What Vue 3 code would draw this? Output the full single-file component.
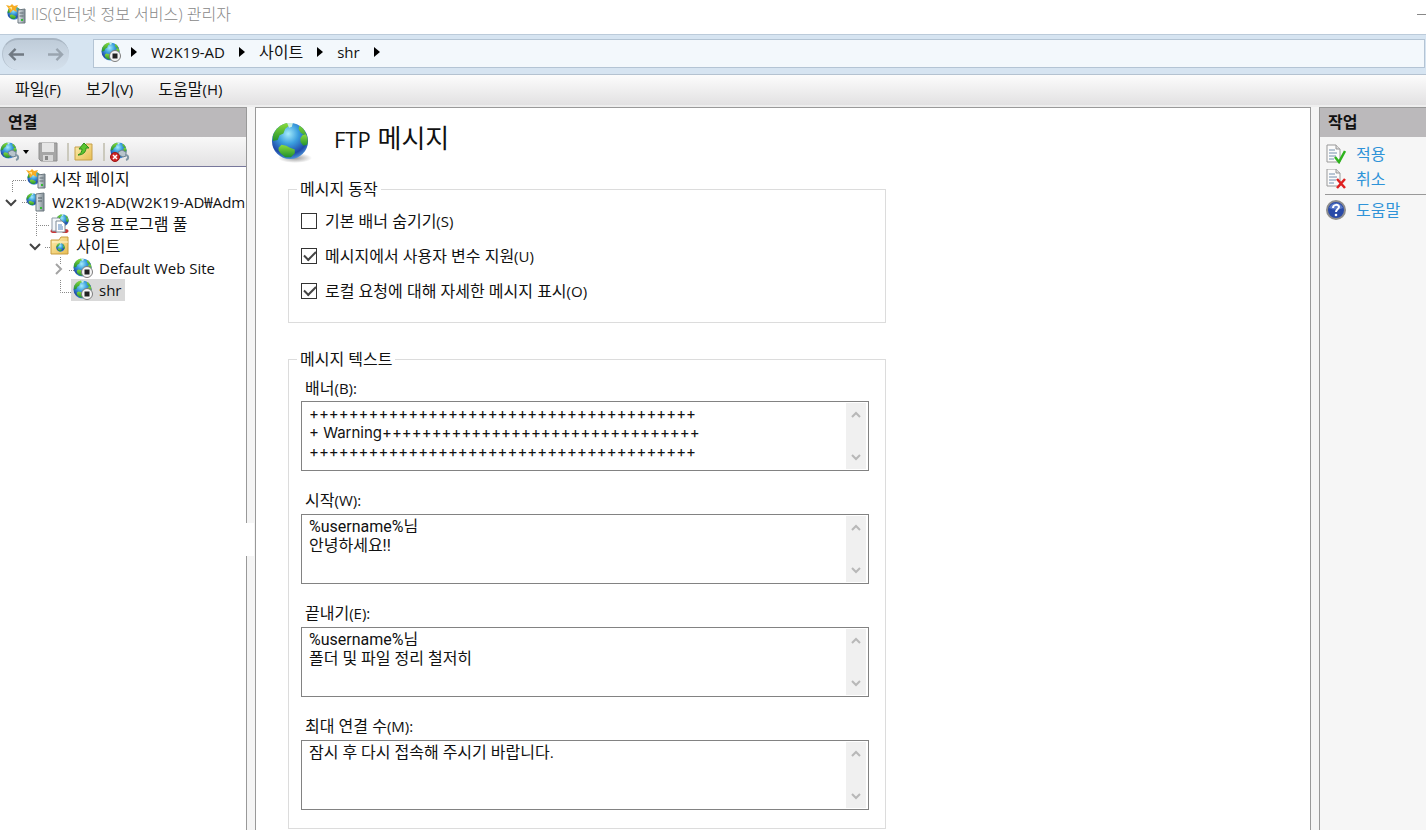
<script setup>
import { ref } from 'vue'

const crumbs = ref([
  { text: 'W2K19-AD', latin: true },
  { text: '사이트', latin: false },
  { text: 'shr', latin: true }
])

const menus = [
  { text: '파일', key: '(F)' },
  { text: '보기', key: '(V)' },
  { text: '도움말', key: '(H)' }
]

const tree = [
  { text: '시작 페이지', icon: 'server', level: 0 },
  { text: 'W2K19-AD(W2K19-AD₩Administrator)', icon: 'server-plain', level: 0, chevron: 'down', latin: true },
  { text: '응용 프로그램 풀', icon: 'pool', level: 1 },
  { text: '사이트', icon: 'folder', level: 1, chevron: 'down' },
  { text: 'Default Web Site', icon: 'site', level: 2, chevron: 'right', latin: true },
  { text: 'shr', icon: 'site', level: 2, latin: true, selected: true }
]

const options = ref([
  { id: 'hide', text: '기본 배너 숨기기', key: '(S)', on: false },
  { id: 'vars', text: '메시지에서 사용자 변수 지원', key: '(U)', on: true },
  { id: 'detail', text: '로컬 요청에 대해 자세한 메시지 표시', key: '(O)', on: true }
])

const messages = ref([
  {
    id: 'banner',
    text: '배너',
    key: '(B):',
    wide: true,
    value: '+'.repeat(39) + '\n+ Warning' + '+'.repeat(32) + '\n' + '+'.repeat(39)
  },
  { id: 'welcome', text: '시작', key: '(W):', value: '%username%님\n안녕하세요!!' },
  { id: 'exit', text: '끝내기', key: '(E):', value: '%username%님\n폴더 및 파일 정리 철저히' },
  { id: 'max', text: '최대 연결 수', key: '(M):', value: '잠시 후 다시 접속해 주시기 바랍니다.' }
])
</script>

<template>
  <div class="window">
    <svg class="defs" width="0" height="0" aria-hidden="true">
      <defs>
        <radialGradient id="sea" cx="45%" cy="30%" r="70%">
          <stop offset="0" stop-color="#a5ecfb" />
          <stop offset=".4" stop-color="#3c9fdf" />
          <stop offset=".8" stop-color="#2049a8" />
          <stop offset="1" stop-color="#4a92d8" />
        </radialGradient>
        <linearGradient id="land" x1="0" y1="0" x2="0" y2="1">
          <stop offset="0" stop-color="#8bdc3c" />
          <stop offset="1" stop-color="#21912f" />
        </linearGradient>
        <linearGradient id="gold" x1="0" y1="0" x2="1" y2="1">
          <stop offset="0" stop-color="#fdeeb1" />
          <stop offset="1" stop-color="#e8bd52" />
        </linearGradient>
        <linearGradient id="steel" x1="0" y1="0" x2="1" y2="0">
          <stop offset="0" stop-color="#e3e9ec" />
          <stop offset="1" stop-color="#7f8b93" />
        </linearGradient>
        <radialGradient id="shade">
          <stop offset="0" stop-color="#555" stop-opacity=".6" />
          <stop offset="1" stop-color="#555" stop-opacity="0" />
        </radialGradient>
      </defs>
      <symbol id="globe" viewBox="0 0 40 40">
        <circle cx="20" cy="20" r="19" fill="url(#sea)" />
        <path d="M2 15C4 7 11 2 17 1l2 3-4 3-2 5-4 2-2 5-5 1zM30 4c4 2 6 6 7 9l-2 1-4-3-2-4z" fill="url(#land)" />
        <path d="M8 27l3-3 5 1 4 2 5 2 0 4-4 4-6 0-5-4-2-3z" fill="url(#land)" />
        <path d="M33 14l4-1c2 4 2 7 1 11l-4 1-3-4 0-4z" fill="url(#land)" />
        <path d="M17 1h6l-1 4-3 1z" fill="#e8ffe4" opacity=".8" />
      </symbol>
      <symbol id="i-server" viewBox="0 0 20 20">
        <use href="#globe" x="1" y="2" width="14" height="14" />
        <path d="M0 1l4 1 2-2 2 2 4-1-2 4 1 3-4-2-3 3-1-4z" fill="#f7ad24" />
        <path d="M3 3l3 0 0 3z" fill="#ffe58b" />
        <path d="M12 6l7-1v14h-7z" fill="url(#steel)" stroke="#6b777e" />
        <path d="M13.500 9h4M13.500 12h4" stroke="#5e6b72" />
        <path d="M15 16h2" stroke="#3b3" stroke-width="2" />
      </symbol>
      <symbol id="i-server-plain" viewBox="0 0 20 20">
        <use href="#globe" x="0" y="1" width="13" height="13" />
        <path d="M10 2l8-1v18h-8z" fill="url(#steel)" stroke="#6b777e" />
        <path d="M12 6h4M12 9h4" stroke="#4f5c63" />
        <path d="M14 16h2" stroke="#3b3" stroke-width="2" />
      </symbol>
      <symbol id="i-pool" viewBox="0 0 20 20">
        <use href="#globe" x="6" y="0" width="13" height="13" />
        <ellipse cx="4" cy="17" rx="3.500" ry="2" fill="#c93636" />
        <ellipse cx="15" cy="17" rx="3.500" ry="2" fill="#c93636" />
        <path d="M2 4h7l2 2v11H2z" fill="#f4f7fa" stroke="#8d99a5" />
        <path d="M6 7h6l3 3v8H6z" fill="#fff" stroke="#7f8b98" />
        <path d="M8 11h4M8 13h5M8 15h5" stroke="#5182bd" />
      </symbol>
      <symbol id="i-folder" viewBox="0 0 20 20">
        <path d="M1 4h8l2-3h7v17H1z" fill="url(#gold)" stroke="#c99c3f" />
        <path d="M2 6h16" stroke="#fff5ce" />
        <use href="#globe" x="6" y="7" width="9" height="9" />
      </symbol>
      <symbol id="i-site" viewBox="0 0 20 20">
        <use href="#globe" x="0" y="0" width="19" height="19" />
        <circle cx="14" cy="14" r="5.500" fill="#f5f5f5" stroke="#7c7c7c" />
        <path d="M11.500 11.500h5v5h-5z" fill="#222" />
      </symbol>
      <symbol id="i-connect" viewBox="0 0 20 20">
        <use href="#globe" x="0" y="0" width="17" height="17" />
        <path d="M8 10l4-2 4 2v4l-3 1-4-2z" fill="#b8c4cc" stroke="#6f8390" />
        <path d="M15 13c4 0 4 4 1 5" fill="none" stroke="#8096a5" stroke-width="2" />
      </symbol>
    </svg>

    <header class="titlebar">
      <svg class="ico" viewBox="0 0 20 20" aria-hidden="true"><use href="#i-server" /></svg>
      <h1>IIS(인터넷 정보 서비스) 관리자</h1>
      <button class="minimize" type="button" aria-label="최소화"></button>
    </header>

    <nav class="navbar">
      <div class="travel">
        <button type="button" aria-label="뒤로">
          <svg viewBox="0 0 18 16"><path d="M8 2L2 8l6 6M2 8h15" fill="none" stroke="#717a83" stroke-width="2.500" /></svg>
        </button>
        <button type="button" aria-label="앞으로">
          <svg viewBox="0 0 18 16"><path d="M10 2l6 6-6 6M16 8H1" fill="none" stroke="#9aa5b0" stroke-width="2.500" /></svg>
        </button>
      </div>
      <div class="address">
        <svg class="ico" viewBox="0 0 20 20" aria-hidden="true"><use href="#i-site" /></svg>
        <svg class="tri" viewBox="0 0 6 10" aria-hidden="true"><path d="M0 0l6 5-6 5z" /></svg>
        <template v-for="c in crumbs" :key="c.text">
          <a href="#" :class="{ latin: c.latin }">{{ c.text }}</a>
          <svg class="tri" viewBox="0 0 6 10" aria-hidden="true"><path d="M0 0l6 5-6 5z" /></svg>
        </template>
      </div>
    </nav>

    <div class="menubar">
      <button v-for="m in menus" :key="m.key" type="button">{{ m.text }}<span class="key">{{ m.key }}</span></button>
    </div>

    <div class="body">
      <aside class="connections">
        <h2>연결</h2>
        <div class="tools">
          <button class="split" type="button" aria-label="연결 만들기">
            <svg class="ico" viewBox="0 0 20 20"><use href="#i-connect" /></svg>
            <svg class="drop" viewBox="0 0 6 4"><path d="M0 0h6L3 4z" /></svg>
          </button>
          <button type="button" aria-label="저장">
            <svg class="ico" viewBox="0 0 20 20">
              <path d="M1 1h18v18H3l-2-2z" fill="#a6a6a6" stroke="#8e8e8e" />
              <path d="M4 1h12v9H4z" fill="#e6e6e6" />
              <path d="M5 13h10v6H5z" fill="#d8d8d8" />
              <path d="M7 14h3v4H7z" fill="#888" />
            </svg>
          </button>
          <i class="sep"></i>
          <button type="button" aria-label="위로">
            <svg class="ico" viewBox="0 0 20 20">
              <path d="M1 5h9l2-3h6v16H1z" fill="url(#gold)" stroke="#c6a04b" />
              <path d="M4 13c3-1 4-4 4-6H5l5-6 5 5h-3c0 4-3 7-8 7z" fill="#5cc52f" stroke="#2d8d1c" />
            </svg>
          </button>
          <i class="sep"></i>
          <button type="button" aria-label="연결 제거">
            <svg class="ico" viewBox="0 0 20 20">
              <use href="#i-connect" />
              <circle cx="5" cy="15" r="4.500" fill="#cf2727" stroke="#9c1515" />
              <path d="M3 13l4 4M7 13l-4 4" stroke="#fff" stroke-width="1.500" />
            </svg>
          </button>
        </div>
        <div class="tree-box">
          <svg class="lines" width="100" height="140" aria-hidden="true">
            <path
              d="M12.500 25V13.500H27M22 35.500h5M36.500 46v24M38 58.500h12M45 80.500h6M60.500 90v8M69 103.500h5M60.500 113v12.500H72"
              fill="none" stroke="#888" stroke-dasharray="1 1"
            />
          </svg>
          <ul>
            <li v-for="n in tree" :key="n.text + n.icon" :class="'lv' + n.level">
              <button v-if="n.chevron" class="chev" type="button" :aria-label="n.text">
                <svg viewBox="0 0 16 16">
                  <path v-if="n.chevron === 'down'" d="M3 6l5 5 5-5" stroke="#444" />
                  <path v-else d="M6 4l5 5-5 5" stroke="#a3a3a3" />
                </svg>
              </button>
              <span v-else class="chev"></span>
              <a href="#" :class="{ selected: n.selected, latin: n.latin }">
                <svg class="ico" viewBox="0 0 20 20" aria-hidden="true"><use :href="'#i-' + n.icon" /></svg>
                <span>{{ n.text }}</span>
              </a>
            </li>
          </ul>
        </div>
        <i class="notch"></i>
      </aside>

      <main class="content">
        <div class="heading">
          <svg viewBox="0 0 44 44" aria-hidden="true">
            <ellipse cx="25" cy="38" rx="17" ry="5" fill="url(#shade)" />
            <use href="#globe" x="1" y="2" width="38" height="38" />
          </svg>
          <h2><span>FTP</span> 메시지</h2>
        </div>

        <fieldset class="behavior">
          <legend>메시지 동작</legend>
          <label v-for="o in options" :key="o.id" :for="o.id">
            <input :id="o.id" v-model="o.on" type="checkbox" />
            <span>{{ o.text }}<span class="key">{{ o.key }}</span></span>
          </label>
        </fieldset>

        <fieldset class="texts">
          <legend>메시지 텍스트</legend>
          <div v-for="m in messages" :key="m.id" class="field">
            <label :for="m.id">{{ m.text }}<span class="key">{{ m.key }}</span></label>
            <div class="box">
              <textarea :id="m.id" v-model="m.value" :class="{ wide: m.wide }" rows="3" spellcheck="false"></textarea>
              <div class="scroll" aria-hidden="true">
                <svg viewBox="0 0 12 10"><path d="M2 8l4-4 4 4" /></svg>
                <svg viewBox="0 0 12 10"><path d="M2 2l4 4 4-4" /></svg>
              </div>
            </div>
          </div>
        </fieldset>
      </main>

      <aside class="actions">
        <h2>작업</h2>
        <a href="#">
          <svg class="ico" viewBox="0 0 20 20" aria-hidden="true">
            <path d="M1 1h9l4 4v13H1z" fill="#fbfbfb" stroke="#999" />
            <path d="M10 1v4h4" fill="#ddd" stroke="#999" />
            <path d="M3 6h6M3 9h8M3 12h7M3 15h5" stroke="#7590ad" />
            <path d="M9 13l4 5 6-11" fill="none" stroke="#2eb31d" stroke-width="2.500" />
          </svg>
          적용
        </a>
        <a href="#">
          <svg class="ico" viewBox="0 0 20 20" aria-hidden="true">
            <path d="M1 0h9l4 4v13H1z" fill="#fbfbfb" stroke="#999" />
            <path d="M10 0v4h4" fill="#ddd" stroke="#999" />
            <path d="M3 5h6M3 8h8M3 11h7M3 14h5" stroke="#7590ad" />
            <path d="M11 10l8 9M19 10l-8 9" stroke="#df2020" stroke-width="2.500" />
          </svg>
          취소
        </a>
        <hr />
        <a href="#">
          <svg class="ico" viewBox="0 0 20 20" aria-hidden="true">
            <circle cx="10" cy="10" r="9" fill="#294aa8" stroke="#8d8d8d" stroke-width="2" />
            <path d="M3 8a7.500 7.500 0 0 1 14 0q-7 3-14 0z" fill="#7d9be0" opacity=".6" />
            <path d="M7 8c0-4 6-4 6-1 0 2-3 2-3 5" fill="none" stroke="#fff" stroke-width="2" />
            <circle cx="10" cy="15" r="1.300" fill="#fff" />
          </svg>
          도움말
        </a>
      </aside>
    </div>
  </div>
</template>

<style>
body {
  margin: 0;
  overflow: hidden;
}
</style>

<style scoped>
* {
  box-sizing: border-box;
}
.window {
  display: flex;
  flex-direction: column;
  height: 100vh;
  overflow: hidden;
  background: #fff;
  color: #111;
  font-family: "Open Sans", "Noto Sans CJK KR", sans-serif;
  font-size: 16px;
  line-height: 20px;
}
.defs {
  position: absolute;
}
h1,
h2 {
  margin: 0;
  font-weight: 400;
}
button {
  padding: 0;
  border: 0;
  background: none;
  color: inherit;
  font: inherit;
}
a {
  color: inherit;
  text-decoration: none;
}
.ico {
  flex: none;
  display: block;
  width: 20px;
  height: 20px;
}
.latin,
.key {
  font-size: 15px;
}
.titlebar {
  display: flex;
  flex: none;
  align-items: center;
  gap: 5px;
  height: 34px;
  padding: 0 0 6px 6px;
  color: #888;
}
.titlebar h1 {
  flex: 1;
  font-size: 16px;
  font-weight: 300;
}
.minimize {
  width: 9px;
  height: 1px;
  background: #888;
}
.navbar {
  display: flex;
  flex: none;
  align-items: center;
  gap: 24px;
  height: 41px;
  padding: 0 1px 2px 2px;
  border-top: 1px solid #bccbda;
  border-bottom: 1px solid #b4c2d0;
  background: #d6e4f1;
}
.travel {
  display: flex;
  align-items: center;
  justify-content: space-between;
  width: 67px;
  height: 32px;
  padding: 0 5px;
  border-top: 2px solid #a8b5c2;
  border-left: 1px solid #b5c2cf;
  border-radius: 16px;
  background: linear-gradient(#bfccd9, #d4e0ec);
}
.travel svg {
  display: block;
  width: 17px;
  height: 15px;
}
.address {
  display: flex;
  flex: 1;
  align-items: center;
  gap: 14px;
  height: 29px;
  padding: 0 0 3px 7px;
  border: 1px solid #b4c4d4;
  background: #f3f8fc;
}
.address .ico {
  margin-right: -4px;
}
.tri {
  width: 6px;
  height: 10px;
}
.menubar {
  display: flex;
  flex: none;
  align-items: center;
  gap: 25px;
  height: 32px;
  padding-left: 15px;
  padding-bottom: 2px;
  border-bottom: 2px solid #eee;
  background: linear-gradient(#fcfcfc, #e2e1e2);
}
.body {
  display: grid;
  flex: 1;
  grid-template-columns: 247px minmax(0, 1fr) 107px;
  gap: 8px;
  min-height: 0;
  background: #f5f5f5;
}
.connections {
  position: relative;
  display: flex;
  flex-direction: column;
  min-width: 0;
  border-top: 1px solid #999;
  border-right: 1px solid #999;
  background: #fff;
}
.connections h2,
.actions h2 {
  flex: none;
  height: 29px;
  padding-left: 8px;
  background: #bbb9bb;
  font-size: 16px;
  font-weight: 700;
  line-height: 28px;
}
.tools {
  display: flex;
  flex: none;
  align-items: center;
  gap: 9px;
  height: 30px;
  border-bottom: 1px solid #77779b;
  background: linear-gradient(#f8f8f8, #e3e2e3);
}
.split {
  display: flex;
  align-items: center;
  gap: 3px;
}
.drop {
  width: 6px;
  height: 4px;
}
.sep {
  width: 2px;
  height: 18px;
  margin-right: -4px;
  background: #cbc9bd;
}
.tree-box {
  position: relative;
  flex: 1;
  overflow: hidden;
}
.lines {
  position: absolute;
  top: 0;
  left: 0;
}
ul {
  margin: 0;
  padding: 0;
  list-style: none;
}
li {
  display: flex;
  align-items: center;
  gap: 5px;
  height: 22px;
  white-space: nowrap;
}
.lv0 {
  height: 23px;
  padding-left: 3px;
}
.lv1 {
  padding-left: 27px;
}
.lv2 {
  padding-left: 50px;
}
.chev {
  flex: none;
  width: 16px;
  height: 16px;
}
.chev svg {
  display: block;
}
.chev path {
  fill: none;
  stroke-width: 2;
}
li a {
  display: flex;
  align-items: center;
  gap: 6px;
  height: 22px;
  padding: 0 4px 0 2px;
}
.selected {
  background: #d9d9d9;
}
.notch {
  position: absolute;
  top: 415px;
  right: -8px;
  width: 8px;
  height: 33px;
  background: #fff;
}
.content {
  padding: 12px 16px 0 14px;
  border: 1px solid #999;
  border-bottom: 0;
  background: #fff;
  overflow: hidden;
}
.heading {
  display: flex;
  align-items: center;
  gap: 20px;
  height: 44px;
}
.heading svg {
  width: 44px;
  height: 44px;
}
.heading h2 {
  padding-bottom: 8px;
  font-size: 26px;
  line-height: 36px;
}
.heading h2 span {
  font-size: 22px;
}
fieldset {
  max-width: 598px;
  margin: 0 0 0 18px;
  padding: 0 16px 0 12px;
  border: 1px solid #dcdcdc;
}
legend {
  margin-left: -4px;
  padding: 0 3px;
  line-height: 20px;
}
.behavior {
  margin-top: 15px;
  padding-bottom: 14px;
}
.behavior label {
  display: flex;
  align-items: center;
  gap: 8px;
  height: 35px;
}
.behavior label:first-of-type {
  margin-top: 4px;
}
input {
  appearance: none;
  width: 16px;
  height: 16px;
  margin: 0;
  border: 1px solid #333;
  background: #fff;
}
input:checked::after {
  display: block;
  width: 10px;
  height: 5px;
  margin: 2px;
  border-bottom: 2px solid #444;
  border-left: 2px solid #444;
  content: "";
  transform: rotate(-45deg);
}
.texts {
  margin-top: 26px;
  padding-bottom: 18px;
}
.field {
  padding-top: 19px;
}
.field:first-of-type {
  padding-top: 9px;
}
.field label {
  display: block;
  height: 24px;
  padding-left: 4px;
}
.field:first-of-type label {
  height: 23px;
}
.box {
  display: flex;
  height: 70px;
  padding: 1px 2px 1px 1px;
  border: 1px solid #828282;
}
textarea {
  flex: 1;
  min-width: 0;
  margin: 0;
  padding: 1px 6px;
  border: 0;
  background: #fff;
  color: #111;
  font-family: Roboto, "Noto Sans CJK KR", sans-serif;
  font-size: 16px;
  line-height: 19px;
  resize: none;
  overflow: hidden;
}
.wide {
  font-family: Inter, "Noto Sans CJK KR", sans-serif;
  font-size: 15px;
}
.scroll {
  display: flex;
  flex-direction: column;
  align-items: center;
  justify-content: space-between;
  width: 20px;
  padding: 6px 0;
  background: #f0f0f0;
}
.scroll svg {
  width: 12px;
  height: 10px;
}
.scroll path {
  fill: none;
  stroke: #b8b8b8;
  stroke-width: 2;
}
.actions {
  border-top: 1px solid #999;
  border-left: 1px solid #999;
  background: #f6f6f6;
}
.actions h2 {
  margin-bottom: 4px;
}
.actions a {
  display: flex;
  align-items: center;
  gap: 10px;
  height: 25px;
  padding-left: 6px;
  color: #2f93d8;
}
hr {
  height: 1px;
  margin: 3px 0 2px 5px;
  border: 0;
  background: #999;
}
</style>
